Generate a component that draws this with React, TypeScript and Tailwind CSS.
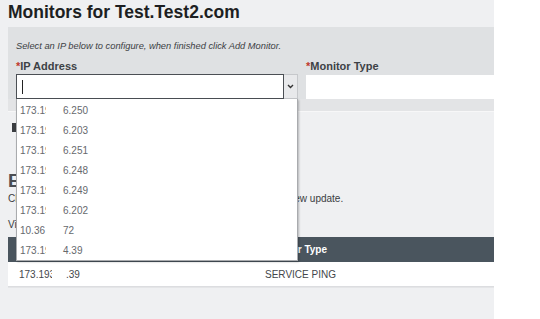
import React from "react";

const items = [
  ["173.19", "6.250"],
  ["173.19", "6.203"],
  ["173.19", "6.251"],
  ["173.19", "6.248"],
  ["173.19", "6.249"],
  ["173.19", "6.202"],
  ["10.36", "72"],
  ["173.19", "4.39"],
];

export default function App() {
  return (
    <div
      className="w-[540px] h-[319px] bg-white flex overflow-hidden relative"
      style={{ fontFamily: '"Liberation Sans", Arial, sans-serif' }}
    >
      <div className="w-[494px] bg-[#eff0f2] flex flex-col">
        <div className="h-[27px] pl-2 pt-[1px] text-[17.5px] font-bold text-[#1d1f22] leading-[22px]">
          Monitors for Test.Test2.com
        </div>
        <div className="ml-2 bg-[#dfe1e3] pl-2 pt-[13px] h-[72px]">
          <div className="text-[9.3px] italic text-[#3c3f43] leading-[12px]">
            Select an IP below to configure, when finished click Add Monitor.
          </div>
          <div className="flex mt-[7px]">
            <div className="w-[282px]">
              <div className="text-[11px] font-bold text-[#3d4146] leading-[14px]">
                <span className="text-[#c0392b]">*</span>IP Address
              </div>
              <div className="flex h-[25px] mt-[1px]">
                <div className="w-[268px] bg-white border border-[#4b4f54] flex items-center pl-[5px]">
                  <div className="w-[1px] h-[14px] bg-[#222]" />
                </div>
                <div className="w-[14px] bg-[#e8e9eb] border border-[#c6c8cb] border-l-0 flex items-center justify-center">
                  <svg width="7" height="5" viewBox="0 0 7 5">
                    <path d="M1 1 L3.5 3.5 L6 1" stroke="#333" strokeWidth="1.4" fill="none" />
                  </svg>
                </div>
              </div>
            </div>
            <div className="ml-[8px] flex-1">
              <div className="text-[11px] font-bold text-[#3d4146] leading-[14px]">
                <span className="text-[#c0392b]">*</span>Monitor Type
              </div>
              <div className="h-[24px] mt-[2px] bg-white" />
            </div>
          </div>
        </div>
        <div className="ml-2 h-[13px] bg-[#e3e4e6] border-b border-[#f7f7f8]" />
        <div className="h-[125px] pl-2 relative">
          <div className="mt-[11px] ml-[4px] w-[8px] h-[9px] bg-[#3a3d41]" />
          <div className="mt-[39px] text-[19px] font-bold text-[#4a4e53] leading-[20px]">
            Existing Monitors
          </div>
          <div className="mt-[2px] text-[10px] text-[#3a3d41] leading-[12px]">
            Choose a monitor in the list below to edit it or to request a new view update.
          </div>
          <div className="mt-[14px] text-[10px] text-[#3a3d41] leading-[12px]">View</div>
        </div>
        <div className="ml-2 h-[25px] bg-[#4a555e] flex items-center text-[10px] font-bold text-white">
          <span className="ml-[11px] w-[246px]">IP Address</span>
          <span>Monitor Type</span>
        </div>
        <div className="ml-2 h-[25px] bg-white flex items-center text-[10px] text-[#44474b] border-b border-[#dcdde0]">
          <span className="ml-[11px] w-[33px] overflow-hidden whitespace-nowrap">173.193</span>
          <span className="ml-[14px] w-[199px]">.39</span>
          <span>SERVICE PING</span>
        </div>
        <div className="flex-1 ml-2 bg-[#eff0f2] border-t border-[#e4e5e7]" />
      </div>

      <div className="absolute left-[16px] top-[99px] w-[282px] h-[162px] pt-[1px] bg-white border border-[#a9abae] border-t-0 shadow-[1px_1px_2px_rgba(0,0,0,0.25)]">
        {items.map(([a, b], i) => (
          <div key={i} className="h-[20px] flex items-center text-[10px] text-[#66696d]">
            <span className="ml-[3px] w-[26px] overflow-hidden whitespace-nowrap">{a}</span>
            <span className="ml-[17px]">{b}</span>
          </div>
        ))}
      </div>
    </div>
  );
}
